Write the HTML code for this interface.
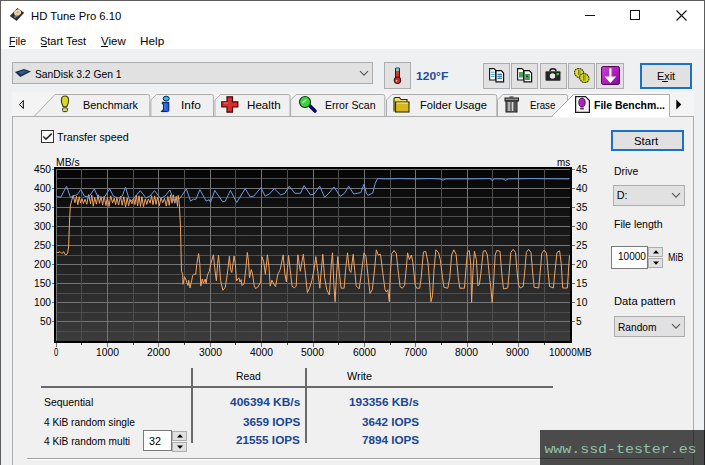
<!DOCTYPE html>
<html><head><meta charset="utf-8"><style>
html,body{margin:0;padding:0;}
body{width:705px;height:465px;overflow:hidden;position:relative;background:#eff0f2;font-family:"Liberation Sans", sans-serif;}
.t{position:absolute;white-space:nowrap;transform-origin:0 0;}
.a{position:absolute;box-sizing:border-box;}
svg{position:absolute;overflow:visible;}
</style></head><body>
<!-- window frame -->
<div class="a" style="left:0;top:0;width:705px;height:49px;background:#fff;"></div>
<div class="a" style="left:0;top:0;width:705px;height:1px;background:#5e5e5e;"></div>
<div class="a" style="left:0;top:0;width:1px;height:465px;background:#5c5c5c;"></div>
<div class="a" style="left:704px;top:0;width:1px;height:465px;background:#5c5c5c;"></div>
<!-- title icon -->
<svg style="left:9px;top:7px" width="17" height="16" viewBox="0 0 17 16">
  <polygon points="8.4,1 15.2,5.8 7.6,14 0.8,8.9" fill="#2e2e2e"/>
  <ellipse cx="8.6" cy="5.6" rx="3.6" ry="3" transform="rotate(-30 8.6 5.6)" fill="#ecd2a8"/>
  <ellipse cx="8.6" cy="5.6" rx="1.2" ry="1" fill="#c8a878"/>
  <polygon points="4.5,9.5 8,7.5 9.5,9 6,11.5" fill="#8a8a8a" opacity="0.7"/>
</svg>
<!-- caption buttons -->
<div class="a" style="left:585px;top:15px;width:10px;height:1px;background:#111;"></div>
<div class="a" style="left:630px;top:10px;width:10px;height:10px;border:1px solid #111;"></div>
<svg style="left:676px;top:10px" width="11" height="11" viewBox="0 0 11 11"><path d="M0.5,0.5 L10.5,10.5 M10.5,0.5 L0.5,10.5" stroke="#111" stroke-width="1.1"/></svg>
<!-- menu underlines -->
<div class="a" style="left:9px;top:46px;width:6px;height:1px;background:#000;"></div>
<div class="a" style="left:40.5px;top:46px;width:6px;height:1px;background:#000;"></div>
<div class="a" style="left:101px;top:46px;width:7px;height:1px;background:#000;"></div>

<!-- drive combo -->
<div class="a" style="left:12px;top:62px;width:361px;height:22px;background:#e1e1e1;border:1px solid #adadad;"></div>
<svg style="left:14px;top:68px" width="18" height="10" viewBox="0 0 18 10">
  <polygon points="0.9,4.1 10,1 17,3.4 6.3,9" fill="#1d2f48"/>
  <polygon points="4,4.2 10,2.2 14,3.6 7,6.8" fill="#2c5c8f"/>
</svg>
<svg style="left:359px;top:70px" width="10" height="7" viewBox="0 0 10 7"><path d="M1,1.2 L5,5.2 L9,1.2" fill="none" stroke="#555" stroke-width="1.1"/></svg>

<!-- thermometer button -->
<div class="a" style="left:384px;top:62px;width:27px;height:27px;background:#e1e1e1;border:1px solid #adadad;"></div>
<svg style="left:392px;top:67px" width="11" height="18" viewBox="0 0 11 18">
  <rect x="3" y="0.5" width="5" height="12" rx="1.5" fill="#2a1a1a"/>
  <rect x="4" y="1.3" width="3" height="3" fill="#7fc8c8"/>
  <rect x="4" y="4.3" width="3" height="8" fill="#d03828"/>
  <circle cx="5.5" cy="13.3" r="3.7" fill="#2a1010"/>
  <circle cx="5.5" cy="13.3" r="2.8" fill="#c82820"/>
  <circle cx="4.6" cy="13.8" r="0.9" fill="#f8d0d0"/>
</svg>

<!-- toolbar buttons -->
<div class="a" style="left:483px;top:63px;width:27px;height:26px;background:#e1e1e1;border:1px solid #adadad;"></div>
<div class="a" style="left:511px;top:63px;width:27px;height:26px;background:#e1e1e1;border:1px solid #adadad;"></div>
<div class="a" style="left:539.5px;top:63px;width:27px;height:26px;background:#e1e1e1;border:1px solid #adadad;"></div>
<div class="a" style="left:567.5px;top:63px;width:27px;height:26px;background:#e1e1e1;border:1px solid #adadad;"></div>
<div class="a" style="left:596px;top:63px;width:28px;height:26px;background:#e1e1e1;border:1px solid #adadad;"></div>
<!-- copy blue -->
<svg style="left:487px;top:66px" width="20" height="20" viewBox="0 0 20 20">
  <path d="M2.6,2.6 H7 L8.6,4.2 V14 H2.6 Z" fill="#fff" stroke="#111" stroke-width="1.1"/>
  <path d="M3.8,6.2 H7.6 M3.8,8.4 H7.6 M3.8,10.4 H7.6" stroke="#38a8d0" stroke-width="1"/>
  <path d="M9,4.7 H14.3 L16.6,7 V15.8 H9 Z" fill="#f2f6fc" stroke="#111" stroke-width="1.2"/>
  <path d="M10.5,8.4 H15 M10.5,10.4 H15 M10.5,12.4 H15" stroke="#2f6fc0" stroke-width="1.1"/>
</svg>
<!-- copy green -->
<svg style="left:515px;top:66px" width="20" height="20" viewBox="0 0 20 20">
  <path d="M2.6,2.6 H7 L8.6,4.2 V14 H2.6 Z" fill="#fff" stroke="#111" stroke-width="1.1"/>
  <rect x="4" y="6" width="4" height="5.5" fill="#3aa858"/>
  <path d="M9,4.7 H14.3 L16.6,7 V15.8 H9 Z" fill="#f4f4f4" stroke="#111" stroke-width="1.2"/>
  <rect x="10.2" y="8" width="4.6" height="6" fill="#3a9a50"/>
  <rect x="11.5" y="9.5" width="1.4" height="1.4" fill="#0a3a10"/>
</svg>
<!-- camera -->
<svg style="left:545px;top:68px" width="16" height="14" viewBox="0 0 16 14">
  <path d="M5,3 Q5,0.7 8,0.7 Q11,0.7 11,3" fill="none" stroke="#222" stroke-width="1.6"/>
  <rect x="0.5" y="3.3" width="15" height="9.5" rx="1" fill="#262626"/>
  <circle cx="7.5" cy="8" r="2.7" fill="#e8e8e8"/>
  <rect x="11.5" y="5" width="2.5" height="2.2" fill="#40c040"/>
</svg>
<!-- coins -->
<svg style="left:573px;top:67px" width="18" height="17" viewBox="0 0 18 17">
  <ellipse cx="6.2" cy="6" rx="4.9" ry="4.3" transform="rotate(40 6.2 6)" fill="#e0e034" stroke="#3a3a08" stroke-width="1.1" stroke-dasharray="1.8 0.5"/>
  <ellipse cx="11.3" cy="11" rx="4.9" ry="4.3" transform="rotate(40 11.3 11)" fill="#d4d42a" stroke="#3a3a08" stroke-width="1.1" stroke-dasharray="1.8 0.5"/>
  <path d="M5.5,2.5 V8 M7,2.5 V8 M10.5,7.5 V13.5 M12,7.5 V13.5" stroke="#6a6a18" stroke-width="0.8"/>
</svg>
<!-- purple down -->
<svg style="left:601px;top:66px" width="19" height="19" viewBox="0 0 19 19">
  <defs><linearGradient id="pg" x1="0" y1="0" x2="1" y2="1"><stop offset="0" stop-color="#d040d8"/><stop offset="1" stop-color="#8a0898"/></linearGradient></defs>
  <rect x="0.5" y="0.5" width="18" height="18" rx="1.8" fill="url(#pg)" stroke="#50085a" stroke-width="1"/>
  <path d="M8.3,2.2 H10.5 V10.5 H15.2 L9.4,17 L3.6,10.5 H8.3 Z" fill="#fff"/>
</svg>
<!-- exit button -->
<div class="a" style="left:640px;top:63px;width:52px;height:26px;background:#e1e1e1;border:2px solid #1a72c4;"></div>
<div class="a" style="left:662px;top:81px;width:6px;height:1px;background:#000;"></div>

<!-- tab strip -->
<div class="a" style="left:12px;top:92px;width:682px;height:25px;background:#f4f4f4;"></div>
<svg style="left:0;top:0" width="705" height="130" viewBox="0 0 705 130">
  <path d="M497.5,116.5 V100 L503.0,94.5 H565.5 Q567.5,94.5 567.5,96.5 V116.5" fill="#f0f0f0" stroke="#adadad"/>
<path d="M386.5,116.5 V100 L392.0,94.5 H494.8 Q496.8,94.5 496.8,96.5 V116.5" fill="#f0f0f0" stroke="#adadad"/>
<path d="M290.7,116.5 V100 L296.2,94.5 H382.8 Q384.8,94.5 384.8,96.5 V116.5" fill="#f0f0f0" stroke="#adadad"/>
<path d="M215,116.5 V100 L220.5,94.5 H288 Q290,94.5 290,96.5 V116.5" fill="#f0f0f0" stroke="#adadad"/>
<path d="M150.9,116.5 V100 L156.4,94.5 H211.5 Q213.5,94.5 213.5,96.5 V116.5" fill="#f0f0f0" stroke="#adadad"/>
<path d="M34,116.5 L55,94.5 H147.8 Q149.8,94.5 149.8,96.5 V116.5" fill="#f0f0f0" stroke="#adadad"/>
  <path d="M19.5,104.5 L23.3,100.5 V108.5 Z" fill="none" stroke="#000" stroke-width="1"/>
  <path d="M676.3,99.5 L681.3,104.5 L676.3,109.5 Z" fill="#000"/>
</svg>
<!-- panel -->
<div class="a" style="left:12px;top:116px;width:682px;height:360px;background:#f0f0f0;border:1px solid #adadad;"></div>
<div class="a" style="left:27px;top:458px;width:657px;height:1px;background:#a0a0a0;"></div>
<div class="a" style="left:27px;top:459px;width:657px;height:1px;background:#fff;"></div>
<svg style="left:0;top:0" width="705" height="130" viewBox="0 0 705 130">
  <path d="M551.6,117.5 L573.5,94.5 H669.5 V117.5 Z" fill="#fff"/>
  <path d="M551.6,116.5 L573.5,94.5 H669.5 V116.5" fill="none" stroke="#adadad"/>
</svg>
<!-- tab icons -->
<svg style="left:60px;top:95px" width="10" height="18" viewBox="0 0 10 18">
  <path d="M5,1 C8,1 8.6,3 8.6,5.5 C8.6,8.5 7,10.5 6.8,11.8 H3.2 C3,10.5 1.4,8.5 1.4,5.5 C1.4,3 2,1 5,1 Z" fill="#d6d62c" stroke="#3c3c08" stroke-width="1.1"/>
  <rect x="2.6" y="12.8" width="4.8" height="3.8" rx="1" fill="#d8d890" stroke="#3c3c08" stroke-width="1"/>
</svg>
<svg style="left:160px;top:95px" width="12" height="18" viewBox="0 0 12 18">
  <ellipse cx="6.2" cy="3.6" rx="3" ry="2.4" fill="#3cb4ea" stroke="#0a2a48" stroke-width="1"/>
  <path d="M2.3,7.3 H8.8 V15.5 Q8.8,16.6 7.6,16.6 H1.2 Q1.6,15.2 3.6,14.8 V9 H2.3 Z" fill="#1f5ee0" stroke="#0a1a50" stroke-width="1"/>
  <path d="M5,9 V14.5" stroke="#4a8af8" stroke-width="1"/>
</svg>
<svg style="left:221px;top:96px" width="18" height="17" viewBox="0 0 18 17">
  <path d="M6,0.8 H11.5 V5.8 H16.8 V11 H11.5 V16.2 H6 V11 H0.8 V5.8 H6 Z" fill="#dd2a2a" stroke="#3a0a0a" stroke-width="1.2"/>
  <path d="M2.5,7 H7" stroke="#f08080" stroke-width="1"/>
</svg>
<svg style="left:298px;top:96px" width="19" height="17" viewBox="0 0 19 17">
  <path d="M12,10 L17,15" stroke="#0a0a60" stroke-width="3.6" stroke-linecap="round"/>
  <circle cx="7" cy="6" r="5.5" fill="#40d040" stroke="#0a4010" stroke-width="1.2"/>
  <path d="M4,7 L8.5,3.5" stroke="#b0f0b0" stroke-width="1.2"/>
</svg>
<svg style="left:393px;top:96px" width="17" height="17" viewBox="0 0 17 17">
  <path d="M1,15.5 V3 Q1,1.5 2.5,1.5 H6.5 L8,3.5 H14 V6" fill="#e8e070" stroke="#2a2a0a" stroke-width="1.1"/>
  <rect x="2.5" y="6" width="13.5" height="10" fill="#d8b818" stroke="#2a2a0a" stroke-width="1.1"/>
  <path d="M3.5,7 H15" stroke="#f8f0a0" stroke-width="1"/>
</svg>
<svg style="left:504px;top:96px" width="16" height="17" viewBox="0 0 16 17">
  <rect x="1" y="2" width="13.5" height="3" fill="#909090" stroke="#1a1a1a" stroke-width="1"/>
  <rect x="5.5" y="0.3" width="4" height="2" fill="#555"/>
  <rect x="2" y="5" width="11" height="11" fill="#707070" stroke="#1a1a1a" stroke-width="1"/>
  <path d="M5,6 V15 M8.5,6 V15" stroke="#d8d8d8" stroke-width="1.2"/>
  <path d="M11,6 V15" stroke="#404040" stroke-width="1.2"/>
</svg>
<svg style="left:575px;top:96px" width="15" height="17" viewBox="0 0 15 17">
  <path d="M0.6,0.6 H10.5 L14.4,4.5 V16.4 H0.6 Z" fill="#f8f8f8" stroke="#1a1a1a" stroke-width="1.2"/>
  <ellipse cx="7" cy="6.5" rx="3.2" ry="4.3" fill="#b020c0" stroke="#400a50" stroke-width="0.9"/>
  <rect x="5.2" y="11.5" width="3.6" height="2" fill="#6a2a6a"/>
</svg>

<!-- checkbox -->
<div class="a" style="left:41px;top:130px;width:13px;height:13px;background:#fff;border:1px solid #333;"></div>
<svg style="left:41px;top:130px" width="13" height="13" viewBox="0 0 13 13"><path d="M2.2,6.5 L5,9.2 L10.8,3.6" fill="none" stroke="#2a2a2a" stroke-width="1.6"/></svg>

<!-- start button -->
<div class="a" style="left:611px;top:130px;width:73px;height:21px;background:#e1e1e1;border:2px solid #1a72c4;"></div>
<!-- D: combo -->
<div class="a" style="left:613px;top:185px;width:72px;height:21px;background:#e1e1e1;border:1px solid #adadad;"></div>
<svg style="left:671px;top:192px" width="10" height="7" viewBox="0 0 10 7"><path d="M1,1.2 L5,5.2 L9,1.2" fill="none" stroke="#555" stroke-width="1.1"/></svg>
<!-- file length edit -->
<div class="a" style="left:611px;top:246px;width:37px;height:23px;background:#fff;border:1px solid #7a7a7a;"></div>
<div class="a" style="left:648px;top:247px;width:15px;height:10px;background:#e1e1e1;border:1px solid #adadad;"></div>
<div class="a" style="left:648px;top:258px;width:15px;height:10px;background:#e1e1e1;border:1px solid #adadad;"></div>
<svg style="left:652.5px;top:250px" width="6" height="4" viewBox="0 0 6 4"><path d="M0,3.5 L3,0.3 L6,3.5 Z" fill="#000"/></svg>
<svg style="left:652.5px;top:261px" width="6" height="4" viewBox="0 0 6 4"><path d="M0,0.5 L3,3.7 L6,0.5 Z" fill="#000"/></svg>
<!-- random combo -->
<div class="a" style="left:614px;top:316px;width:71px;height:21px;background:#e1e1e1;border:1px solid #adadad;"></div>
<svg style="left:671px;top:323px" width="10" height="7" viewBox="0 0 10 7"><path d="M1,1.2 L5,5.2 L9,1.2" fill="none" stroke="#555" stroke-width="1.1"/></svg>

<!-- table lines -->
<div class="a" style="left:41px;top:386px;width:512px;height:2px;background:#6a6a6a;"></div>
<div class="a" style="left:191px;top:368px;width:2px;height:75px;background:#6a6a6a;"></div>
<div class="a" style="left:305px;top:368px;width:2px;height:75px;background:#6a6a6a;"></div>
<!-- 32 spin -->
<div class="a" style="left:143px;top:430px;width:29px;height:21px;background:#fff;border:1px solid #7a7a7a;"></div>
<div class="a" style="left:172px;top:431px;width:15px;height:10px;background:#e1e1e1;border:1px solid #adadad;"></div>
<div class="a" style="left:172px;top:442px;width:15px;height:10px;background:#e1e1e1;border:1px solid #adadad;"></div>
<svg style="left:176.5px;top:434px" width="6" height="4" viewBox="0 0 6 4"><path d="M0,3.5 L3,0.3 L6,3.5 Z" fill="#000"/></svg>
<svg style="left:176.5px;top:445px" width="6" height="4" viewBox="0 0 6 4"><path d="M0,0.5 L3,3.7 L6,0.5 Z" fill="#000"/></svg>

<svg style="left:0;top:0" width="705" height="465" viewBox="0 0 705 465">
<defs><linearGradient id="g" x1="0" y1="0" x2="0" y2="1"><stop offset="0" stop-color="#050505"/><stop offset="0.45" stop-color="#1c1c1c"/><stop offset="1" stop-color="#3c3c3c"/></linearGradient></defs>
<rect x="54" y="167" width="518" height="176" fill="#000"/>
<rect x="56" y="169" width="514" height="172" fill="url(#g)"/>
<rect x="56" y="331" width="514" height="1" fill="#4e4e4e"/>
<rect x="56" y="321" width="514" height="1" fill="#747474"/>
<rect x="56" y="312" width="514" height="1" fill="#4e4e4e"/>
<rect x="56" y="302" width="514" height="1" fill="#747474"/>
<rect x="56" y="293" width="514" height="1" fill="#4e4e4e"/>
<rect x="56" y="283" width="514" height="1" fill="#747474"/>
<rect x="56" y="274" width="514" height="1" fill="#4e4e4e"/>
<rect x="56" y="264" width="514" height="1" fill="#747474"/>
<rect x="56" y="255" width="514" height="1" fill="#4e4e4e"/>
<rect x="56" y="245" width="514" height="1" fill="#747474"/>
<rect x="56" y="235" width="514" height="1" fill="#4e4e4e"/>
<rect x="56" y="226" width="514" height="1" fill="#747474"/>
<rect x="56" y="216" width="514" height="1" fill="#4e4e4e"/>
<rect x="56" y="207" width="514" height="1" fill="#747474"/>
<rect x="56" y="197" width="514" height="1" fill="#4e4e4e"/>
<rect x="56" y="188" width="514" height="1" fill="#747474"/>
<rect x="56" y="178" width="514" height="1" fill="#4e4e4e"/>
<rect x="56" y="169" width="514" height="1" fill="#747474"/>
<rect x="56" y="169" width="1" height="172" fill="#747474"/>
<rect x="56" y="343" width="1" height="4" fill="#747474"/>
<rect x="81" y="169" width="1" height="172" fill="#4e4e4e"/>
<rect x="81" y="343" width="1" height="2" fill="#4e4e4e"/>
<rect x="107" y="169" width="1" height="172" fill="#747474"/>
<rect x="107" y="343" width="1" height="4" fill="#747474"/>
<rect x="133" y="169" width="1" height="172" fill="#4e4e4e"/>
<rect x="133" y="343" width="1" height="2" fill="#4e4e4e"/>
<rect x="158" y="169" width="1" height="172" fill="#747474"/>
<rect x="158" y="343" width="1" height="4" fill="#747474"/>
<rect x="184" y="169" width="1" height="172" fill="#4e4e4e"/>
<rect x="184" y="343" width="1" height="2" fill="#4e4e4e"/>
<rect x="210" y="169" width="1" height="172" fill="#747474"/>
<rect x="210" y="343" width="1" height="4" fill="#747474"/>
<rect x="235" y="169" width="1" height="172" fill="#4e4e4e"/>
<rect x="235" y="343" width="1" height="2" fill="#4e4e4e"/>
<rect x="261" y="169" width="1" height="172" fill="#747474"/>
<rect x="261" y="343" width="1" height="4" fill="#747474"/>
<rect x="287" y="169" width="1" height="172" fill="#4e4e4e"/>
<rect x="287" y="343" width="1" height="2" fill="#4e4e4e"/>
<rect x="313" y="169" width="1" height="172" fill="#747474"/>
<rect x="313" y="343" width="1" height="4" fill="#747474"/>
<rect x="338" y="169" width="1" height="172" fill="#4e4e4e"/>
<rect x="338" y="343" width="1" height="2" fill="#4e4e4e"/>
<rect x="364" y="169" width="1" height="172" fill="#747474"/>
<rect x="364" y="343" width="1" height="4" fill="#747474"/>
<rect x="390" y="169" width="1" height="172" fill="#4e4e4e"/>
<rect x="390" y="343" width="1" height="2" fill="#4e4e4e"/>
<rect x="415" y="169" width="1" height="172" fill="#747474"/>
<rect x="415" y="343" width="1" height="4" fill="#747474"/>
<rect x="441" y="169" width="1" height="172" fill="#4e4e4e"/>
<rect x="441" y="343" width="1" height="2" fill="#4e4e4e"/>
<rect x="467" y="169" width="1" height="172" fill="#747474"/>
<rect x="467" y="343" width="1" height="4" fill="#747474"/>
<rect x="492" y="169" width="1" height="172" fill="#4e4e4e"/>
<rect x="492" y="343" width="1" height="2" fill="#4e4e4e"/>
<rect x="518" y="169" width="1" height="172" fill="#747474"/>
<rect x="518" y="343" width="1" height="4" fill="#747474"/>
<rect x="544" y="169" width="1" height="172" fill="#4e4e4e"/>
<rect x="544" y="343" width="1" height="2" fill="#4e4e4e"/>
<rect x="52" y="321" width="2" height="1" fill="#747474"/>
<rect x="572" y="321" width="3" height="1" fill="#747474"/>
<rect x="52" y="302" width="2" height="1" fill="#747474"/>
<rect x="572" y="302" width="3" height="1" fill="#747474"/>
<rect x="52" y="283" width="2" height="1" fill="#747474"/>
<rect x="572" y="283" width="3" height="1" fill="#747474"/>
<rect x="52" y="264" width="2" height="1" fill="#747474"/>
<rect x="572" y="264" width="3" height="1" fill="#747474"/>
<rect x="52" y="245" width="2" height="1" fill="#747474"/>
<rect x="572" y="245" width="3" height="1" fill="#747474"/>
<rect x="52" y="226" width="2" height="1" fill="#747474"/>
<rect x="572" y="226" width="3" height="1" fill="#747474"/>
<rect x="52" y="207" width="2" height="1" fill="#747474"/>
<rect x="572" y="207" width="3" height="1" fill="#747474"/>
<rect x="52" y="188" width="2" height="1" fill="#747474"/>
<rect x="572" y="188" width="3" height="1" fill="#747474"/>
<rect x="52" y="169" width="2" height="1" fill="#747474"/>
<rect x="572" y="169" width="3" height="1" fill="#747474"/>
<polyline points="56.4,252.0 58.0,252.8 60.0,251.6 62.0,253.6 63.6,251.6 65.6,255.0 67.5,253.5 68.6,247.0 69.5,222.0 70.3,206.0 71.7,200.5 73.2,195.3 74.9,202.8 76.5,196.3 77.8,204.8 79.2,196.7 80.5,202.9 82.1,198.6 83.4,203.5 85.1,199.2 86.8,204.3 88.6,194.7 90.5,203.8 91.8,195.1 93.3,206.2 94.7,197.4 96.4,204.2 98.1,194.8 99.4,203.4 101.1,196.6 102.6,205.1 104.2,196.0 105.9,205.6 107.4,197.4 109.0,206.4 110.7,195.9 112.6,203.0 114.2,198.3 115.6,204.7 116.9,197.8 118.6,205.1 120.5,196.1 122.2,205.2 123.8,196.8 125.6,206.8 127.2,197.8 128.6,205.7 130.2,199.5 132.0,203.8 133.6,197.8 134.9,204.6 136.3,195.1 137.6,206.0 139.0,195.7 140.5,206.4 141.9,196.7 143.5,206.5 145.3,198.8 146.8,204.4 148.3,198.9 150.2,203.2 151.6,195.7 153.0,204.7 154.7,195.8 156.0,204.4 157.5,197.3 159.4,205.6 161.0,197.6 162.7,202.7 164.5,198.4 166.3,206.1 167.9,196.5 169.2,205.4 170.6,194.8 172.0,203.2 173.5,194.8 174.8,203.2 176.2,196.3 177.5,206.4 178.2,195.4 179.3,203.6 180.5,227.3 181.5,271.3 182.7,274.3 183.0,284.3 184.5,276.7 186.2,280.2 186.8,282.6 188.0,285.5 188.6,280.2 190.1,287.9 191.6,280.8 192.7,275.5 193.9,274.3 195.7,274.3 196.9,263.6 198.6,253.6 199.8,263.6 200.8,286.1 202.2,279.0 203.4,283.2 205.2,279.0 206.0,283.7 207.5,274.9 209.3,271.3 210.5,264.8 213.4,254.8 215.2,271.9 216.4,280.8 217.6,263.6 218.5,255.4 219.3,263.6 220.5,280.2 222.9,290.3 225.3,287.3 227.6,271.9 229.4,256.0 230.6,269.6 231.8,272.5 234.1,256.0 235.3,263.6 236.5,280.8 238.9,277.8 240.0,282.0 241.2,279.6 241.8,285.5 244.1,283.8 245.9,268.4 247.3,252.4 248.5,261.3 249.5,277.8 251.2,269.6 252.4,273.1 254.2,285.5 255.4,288.5 257.7,287.3 260.7,282.0 261.9,256.6 263.6,261.3 265.4,274.3 267.4,254.8 269.0,267.2 270.2,286.1 271.9,280.2 273.7,283.8 275.5,286.7 277.8,274.3 280.2,269.6 283.2,254.8 284.9,274.3 286.4,282.0 288.5,255.4 290.3,270.7 292.0,286.1 294.4,287.9 296.2,286.1 297.9,254.8 300.3,271.3 303.3,254.2 305.6,275.5 307.4,292.6 309.5,288.2 311.8,280.6 314.0,270.1 315.8,256.6 317.8,271.6 319.8,288.2 321.6,267.1 322.8,254.3 324.6,277.6 326.8,289.7 329.4,295.0 331.3,264.1 332.5,252.8 333.9,285.2 335.1,301.7 336.6,273.9 337.8,256.6 339.3,273.1 341.1,288.2 344.1,288.2 345.6,270.1 347.5,252.8 349.4,270.1 350.9,272.4 353.2,254.3 354.7,270.1 356.2,285.9 359.2,288.9 361.5,272.4 364.0,252.8 366.0,256.6 368.2,277.6 370.0,293.4 372.3,289.7 374.5,270.1 376.3,249.8 378.3,255.0 380.5,254.3 382.8,273.1 385.0,289.7 386.3,291.9 387.8,289.7 389.3,301.7 390.3,273.1 391.8,253.5 394.1,250.5 396.3,253.5 398.6,274.6 400.1,286.7 402.4,288.2 404.6,285.2 406.1,270.1 407.6,252.8 409.4,259.6 411.4,255.0 412.9,262.6 415.2,285.2 416.7,288.2 419.7,288.2 421.2,277.6 423.4,252.0 425.7,251.3 428.0,262.6 430.2,291.2 431.0,301.7 432.5,295.7 434.0,270.1 435.9,249.8 438.5,252.8 440.3,259.6 442.5,277.6 444.0,287.4 447.8,288.2 449.8,277.6 451.6,255.0 453.8,249.8 456.1,254.3 458.3,277.6 459.8,288.2 464.4,288.2 465.9,270.1 467.4,252.0 469.3,250.5 470.8,265.6 471.6,302.5 472.9,273.1 474.4,251.3 476.4,259.6 477.9,285.9 479.4,284.4 480.9,273.1 483.2,251.3 485.4,250.5 487.4,255.0 489.2,274.6 490.7,286.7 492.2,302.5 493.4,285.2 495.2,255.0 496.7,250.5 500.0,251.3 502.0,276.1 503.5,288.9 507.7,288.0 509.3,271.0 510.8,252.4 513.2,249.3 515.5,252.4 517.0,271.0 518.6,284.9 520.1,288.0 523.2,286.5 524.8,271.0 526.3,252.4 528.6,249.3 531.0,252.4 532.5,271.0 534.1,287.2 538.7,288.0 540.3,271.0 541.8,253.2 544.1,250.1 546.5,253.2 548.0,271.0 549.6,286.5 553.4,288.0 555.0,271.0 557.0,252.4 559.6,250.8 561.2,263.2 562.7,288.0 567.4,288.0 568.9,263.2 569.5,255.5" fill="none" stroke="#f2a564" stroke-width="1" stroke-linejoin="round"/>
<polyline points="56.3,196.4 60.8,197.2 66.5,186.2 70.5,197.5 73.9,195.8 77.3,194.7 80.7,189.6 84.6,196.4 89.2,196.4 94.3,189.0 97.7,196.4 103.9,198.1 109.6,188.8 113.6,196.4 118.7,198.1 122.1,196.4 125.5,187.3 130.0,202.0 133.4,198.7 140.3,190.6 146.0,198.0 150.0,196.0 154.5,190.6 160.5,198.5 165.0,196.0 169.9,190.0 174.6,202.5 180.0,198.2 186.4,189.0 190.6,201.1 193.5,199.0 195.6,199.7 199.9,189.7 206.2,201.1 209.1,199.7 210.5,202.5 214.8,190.4 222.6,201.8 225.4,201.1 230.4,190.4 236.7,202.5 245.2,188.7 250.2,196.8 253.8,196.1 260.9,187.6 265.1,196.1 269.4,194.0 274.3,188.7 280.7,195.0 284.9,193.3 289.2,186.2 294.9,193.3 300.5,193.3 304.1,185.5 310.5,195.0 314.0,194.0 319.7,186.2 324.6,197.2 328.9,193.3 333.9,186.9 340.2,196.4 344.5,193.3 348.8,186.2 353.7,194.0 360.8,192.6 364.1,184.1 366.5,194.0 368.1,195.3 372.8,193.0 375.1,183.6 377.5,178.6 385.3,178.9 400.0,178.6 415.0,178.9 430.0,178.6 440.0,178.9 443.0,180.2 446.0,178.9 470.0,178.9 490.0,178.6 492.3,180.5 494.5,178.9 503.0,178.9 505.6,180.5 508.0,178.9 530.0,178.6 569.0,178.9" fill="none" stroke="#6c9be0" stroke-width="1" stroke-linejoin="round"/>
</svg>
<div class="t" style="left:31.00px;top:11.43px;font-size:11.3px;line-height:11.3px;color:#000;transform:scaleX(0.9986);">HD Tune Pro 6.10</div><div class="t" style="left:8.60px;top:36.19px;font-size:11px;line-height:11px;color:#000;transform:scaleX(0.9591);">File</div><div class="t" style="left:40.40px;top:36.19px;font-size:11px;line-height:11px;color:#000;transform:scaleX(0.9966);">Start Test</div><div class="t" style="left:100.80px;top:36.19px;font-size:11px;line-height:11px;color:#000;transform:scaleX(1.0447);">View</div><div class="t" style="left:140.30px;top:36.19px;font-size:11px;line-height:11px;color:#000;transform:scaleX(1.0697);">Help</div><div class="t" style="left:34.80px;top:69.60px;font-size:10.4px;line-height:10.4px;color:#000;transform:scaleX(0.9918);">SanDisk 3.2 Gen 1</div><div class="t" style="left:416.40px;top:70.63px;font-size:11.3px;line-height:11.3px;color:#1c4c9c;font-weight:bold;transform:scaleX(1.0672);">120°F</div><div class="t" style="left:656.70px;top:70.99px;font-size:11px;line-height:11px;color:#000;transform:scaleX(0.9871);">Exit</div><div class="t" style="left:83.40px;top:99.76px;font-size:10.8px;line-height:10.8px;color:#000;transform:scaleX(1.0072);">Benchmark</div><div class="t" style="left:181.30px;top:99.76px;font-size:10.8px;line-height:10.8px;color:#000;transform:scaleX(1.1050);">Info</div><div class="t" style="left:247.00px;top:99.76px;font-size:10.8px;line-height:10.8px;color:#000;transform:scaleX(1.0766);">Health</div><div class="t" style="left:324.70px;top:99.76px;font-size:10.8px;line-height:10.8px;color:#000;transform:scaleX(0.9787);">Error Scan</div><div class="t" style="left:419.70px;top:99.76px;font-size:10.8px;line-height:10.8px;color:#000;transform:scaleX(1.0322);">Folder Usage</div><div class="t" style="left:530.20px;top:99.76px;font-size:10.8px;line-height:10.8px;color:#000;transform:scaleX(0.8970);">Erase</div><div class="t" style="left:594.30px;top:99.76px;font-size:10.8px;line-height:10.8px;color:#000;font-weight:bold;transform:scaleX(0.9700);">File Benchm...</div><div class="t" style="left:57.30px;top:131.86px;font-size:10.8px;line-height:10.8px;color:#000;transform:scaleX(0.9929);">Transfer speed</div><div class="t" style="left:634.40px;top:135.89px;font-size:11px;line-height:11px;color:#000;transform:scaleX(1.0375);">Start</div><div class="t" style="left:614.00px;top:166.16px;font-size:10.8px;line-height:10.8px;color:#000;transform:scaleX(0.9645);">Drive</div><div class="t" style="left:613.70px;top:218.76px;font-size:10.8px;line-height:10.8px;color:#000;transform:scaleX(0.9756);">File length</div><div class="t" style="left:618.30px;top:250.63px;font-size:10.6px;line-height:10.6px;color:#000;transform:scaleX(0.9471);">10000</div><div class="t" style="left:667.60px;top:251.63px;font-size:10.6px;line-height:10.6px;color:#000;transform:scaleX(0.8441);">MiB</div><div class="t" style="left:613.80px;top:295.86px;font-size:10.8px;line-height:10.8px;color:#000;transform:scaleX(1.0350);">Data pattern</div><div class="t" style="left:617.60px;top:321.66px;font-size:10.8px;line-height:10.8px;color:#000;transform:scaleX(0.9409);">Random</div><div class="t" style="left:616.80px;top:190.46px;font-size:10.8px;line-height:10.8px;color:#000;">D:</div><div class="t" style="left:235.50px;top:372.08px;font-size:10.3px;line-height:10.3px;color:#000;transform:scaleX(1.0034);">Read</div><div class="t" style="left:346.90px;top:372.08px;font-size:10.3px;line-height:10.3px;color:#000;transform:scaleX(1.0530);">Write</div><div class="t" style="left:44.00px;top:397.98px;font-size:10.3px;line-height:10.3px;color:#000;transform:scaleX(1.0110);">Sequential</div><div class="t" style="left:44.00px;top:417.78px;font-size:10.3px;line-height:10.3px;color:#000;transform:scaleX(0.9864);">4 KiB random single</div><div class="t" style="left:44.00px;top:436.98px;font-size:10.3px;line-height:10.3px;color:#000;transform:scaleX(0.9887);">4 KiB random multi</div><div class="t" style="left:149.40px;top:435.63px;font-size:10.6px;line-height:10.6px;color:#000;transform:scaleX(1.0184);">32</div><div class="t" style="left:229.70px;top:397.06px;font-size:10.8px;line-height:10.8px;color:#1a4792;font-weight:bold;transform:scaleX(1.1049);">406394 KB/s</div><div class="t" style="left:242.60px;top:416.86px;font-size:10.8px;line-height:10.8px;color:#1a4792;font-weight:bold;transform:scaleX(1.0867);">3659 IOPS</div><div class="t" style="left:236.10px;top:435.06px;font-size:10.8px;line-height:10.8px;color:#1a4792;font-weight:bold;transform:scaleX(1.0863);">21555 IOPS</div><div class="t" style="left:349.00px;top:397.06px;font-size:10.8px;line-height:10.8px;color:#1a4792;font-weight:bold;transform:scaleX(1.0970);">193356 KB/s</div><div class="t" style="left:361.70px;top:416.86px;font-size:10.8px;line-height:10.8px;color:#1a4792;font-weight:bold;transform:scaleX(1.0810);">3642 IOPS</div><div class="t" style="left:361.70px;top:435.06px;font-size:10.8px;line-height:10.8px;color:#1a4792;font-weight:bold;transform:scaleX(1.0810);">7894 IOPS</div><div class="t" style="left:56.40px;top:157.33px;font-size:10.6px;line-height:10.6px;color:#000;transform:scaleX(0.9780);">MB/s</div><div class="t" style="left:556.50px;top:156.83px;font-size:10.6px;line-height:10.6px;color:#000;transform:scaleX(0.9277);">ms</div><div class="t" style="left:39.50px;top:316.40px;font-size:10.6px;line-height:10.6px;color:#000;transform:scaleX(0.9590);">50</div><div class="t" style="left:33.80px;top:297.38px;font-size:10.6px;line-height:10.6px;color:#000;transform:scaleX(0.9618);">100</div><div class="t" style="left:33.80px;top:278.35px;font-size:10.6px;line-height:10.6px;color:#000;transform:scaleX(0.9618);">150</div><div class="t" style="left:33.80px;top:259.33px;font-size:10.6px;line-height:10.6px;color:#000;transform:scaleX(0.9618);">200</div><div class="t" style="left:33.80px;top:240.30px;font-size:10.6px;line-height:10.6px;color:#000;transform:scaleX(0.9618);">250</div><div class="t" style="left:33.80px;top:221.28px;font-size:10.6px;line-height:10.6px;color:#000;transform:scaleX(0.9618);">300</div><div class="t" style="left:33.80px;top:202.25px;font-size:10.6px;line-height:10.6px;color:#000;transform:scaleX(0.9618);">350</div><div class="t" style="left:33.80px;top:183.23px;font-size:10.6px;line-height:10.6px;color:#000;transform:scaleX(0.9618);">400</div><div class="t" style="left:33.80px;top:164.20px;font-size:10.6px;line-height:10.6px;color:#000;transform:scaleX(0.9618);">450</div><div class="t" style="left:576.30px;top:316.40px;font-size:10.6px;line-height:10.6px;color:#000;transform:scaleX(0.9675);">5</div><div class="t" style="left:576.30px;top:297.38px;font-size:10.6px;line-height:10.6px;color:#000;transform:scaleX(0.9590);">10</div><div class="t" style="left:576.30px;top:278.35px;font-size:10.6px;line-height:10.6px;color:#000;transform:scaleX(0.9590);">15</div><div class="t" style="left:576.30px;top:259.33px;font-size:10.6px;line-height:10.6px;color:#000;transform:scaleX(0.9590);">20</div><div class="t" style="left:576.30px;top:240.30px;font-size:10.6px;line-height:10.6px;color:#000;transform:scaleX(0.9590);">25</div><div class="t" style="left:576.30px;top:221.28px;font-size:10.6px;line-height:10.6px;color:#000;transform:scaleX(0.9590);">30</div><div class="t" style="left:576.30px;top:202.25px;font-size:10.6px;line-height:10.6px;color:#000;transform:scaleX(0.9590);">35</div><div class="t" style="left:576.30px;top:183.23px;font-size:10.6px;line-height:10.6px;color:#000;transform:scaleX(0.9590);">40</div><div class="t" style="left:576.30px;top:164.20px;font-size:10.6px;line-height:10.6px;color:#000;transform:scaleX(0.9590);">45</div><div class="t" style="left:54.00px;top:346.83px;font-size:10.6px;line-height:10.6px;color:#000;transform:scaleX(0.7298);">0</div><div class="t" style="left:96.05px;top:346.83px;font-size:10.6px;line-height:10.6px;color:#000;transform:scaleX(0.9717);">1000</div><div class="t" style="left:147.35px;top:346.83px;font-size:10.6px;line-height:10.6px;color:#000;transform:scaleX(0.9717);">2000</div><div class="t" style="left:198.65px;top:346.83px;font-size:10.6px;line-height:10.6px;color:#000;transform:scaleX(0.9717);">3000</div><div class="t" style="left:249.95px;top:346.83px;font-size:10.6px;line-height:10.6px;color:#000;transform:scaleX(0.9717);">4000</div><div class="t" style="left:301.25px;top:346.83px;font-size:10.6px;line-height:10.6px;color:#000;transform:scaleX(0.9717);">5000</div><div class="t" style="left:352.55px;top:346.83px;font-size:10.6px;line-height:10.6px;color:#000;transform:scaleX(0.9717);">6000</div><div class="t" style="left:403.85px;top:346.83px;font-size:10.6px;line-height:10.6px;color:#000;transform:scaleX(0.9717);">7000</div><div class="t" style="left:455.15px;top:346.83px;font-size:10.6px;line-height:10.6px;color:#000;transform:scaleX(0.9717);">8000</div><div class="t" style="left:506.45px;top:346.83px;font-size:10.6px;line-height:10.6px;color:#000;transform:scaleX(0.9717);">9000</div><div class="t" style="left:548.70px;top:346.83px;font-size:10.6px;line-height:10.6px;color:#000;transform:scaleX(0.9394);">10000MB</div>
<div class="a" style="left:540px;top:430px;width:165px;height:35px;background:rgba(0,0,0,0.69);"></div>
<div class="t" style="left:544.4px;top:441.80px;font-family:'Liberation Mono', monospace;font-size:15px;line-height:15px;letter-spacing:-0.05px;transform:scaleY(0.86);transform-origin:0 12.7px;color:#8ec3a6;">www.ssd-tester.es</div>
</body></html>
